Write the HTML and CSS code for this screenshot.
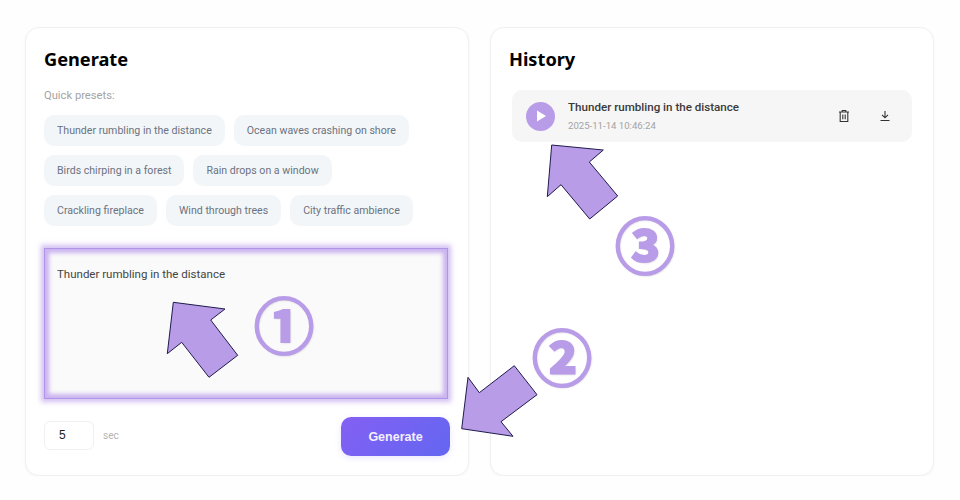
FILE: index.html
```html
<!DOCTYPE html>
<html lang="en">
<head>
    <meta charset="UTF-8">
    <meta name="viewport" content="width=device-width, initial-scale=1.0">
    <title>Sound Generator</title>
    <link rel="stylesheet" href="styles.css">
</head>
<body>
    <div class="container">
        <div class="card">
            <h2 class="card-title">Generate</h2>
            <p class="presets-label">Quick presets:</p>
            <div class="presets">
                <span class="preset">Thunder rumbling in the distance</span>
                <span class="preset">Ocean waves crashing on shore</span>
                <span class="preset">Birds chirping in a forest</span>
                <span class="preset">Rain drops on a window</span>
                <span class="preset">Crackling fireplace</span>
                <span class="preset">Wind through trees</span>
                <span class="preset">City traffic ambience</span>
            </div>
            <div class="prompt">Thunder rumbling in the distance</div>
            <div class="controls">
                <div class="duration">
                    <span class="duration-input">5</span>
                    <span class="duration-unit">sec</span>
                </div>
                <button class="generate-btn">Generate</button>
            </div>
        </div>

        <div class="card">
            <h2 class="card-title">History</h2>
            <div class="history-item">
                <span class="play-btn">
                    <svg width="12" height="12" viewBox="0 0 12 12"><path d="M2 0.5 L11 6 L2 11.5 Z" fill="#fff"/></svg>
                </span>
                <div class="history-text">
                    <div class="history-title">Thunder rumbling in the distance</div>
                    <div class="history-date">2025-11-14 10:46:24</div>
                </div>
                <div class="history-actions">
                    <svg width="14" height="14" viewBox="0 0 14 14" fill="none" stroke="#333" stroke-width="1.1">
                        <path d="M2 3 H12 M5.2 3 V1.5 H8.8 V3 M3.2 3 V12.5 H10.8 V3 M5.8 5.5 V10.3 M8.2 5.5 V10.3"/>
                    </svg>
                    <svg width="14" height="14" viewBox="0 0 14 14" fill="none" stroke="#333" stroke-width="1.1">
                        <path d="M7 2 V8.6 M4 5.8 L7 8.8 L10 5.8 M2.5 11.5 H11.5"/>
                    </svg>
                </div>
            </div>
        </div>
    </div>

    <!-- annotations drawn on top of the screenshot -->
    <svg class="arrows" width="960" height="500" viewBox="0 0 960 500">
        <polygon points="173.3,302.3 225,309 210.7,320 237.7,355.3 209,377.3 181.7,342.3 167.3,353.7"/>
        <polygon points="461.7,428.7 468,377.3 479.3,392.7 514.3,365.7 537,394.7 501,421.7 513,436.3"/>
        <polygon points="551.7,145 603.3,150 589.3,162 617.7,196 589.7,219 561,184.7 547.3,196.7"/>
    </svg>
    <span class="step step-1">①</span>
    <span class="step step-2">②</span>
    <span class="step step-3">③</span>
</body>
</html>
```

FILE: styles.css
```css
* {
    margin: 0;
    padding: 0;
    box-sizing: border-box;
    font-family: Roboto, "Noto Sans", sans-serif;
}

body {
    background-color: #fefefe;
    padding: 27px 25px 0;
}

.container {
    display: flex;
    gap: 21px;
}

.card {
    width: 444px;
    height: 449px;
    padding: 18px;
    background: white;
    border: 1px solid #f0f0f0;
    border-radius: 14px;
    box-shadow: 0 1px 3px rgba(0, 0, 0, 0.04);
}

.card-title {
    font-family: "Noto Sans", sans-serif;
    font-size: 18.2px;
    line-height: 26px;
    font-weight: 700;
    color: #000;
}

.presets-label {
    margin-top: 16px;
    font-size: 11.2px;
    line-height: 16px;
    color: #a3a3a3;
}

.presets {
    display: flex;
    flex-wrap: wrap;
    gap: 9px;
    margin-top: 11px;
}

.preset {
    height: 31px;
    padding: 0 13px;
    line-height: 31px;
    font-size: 10.6px;
    color: #6b7280;
    background: #f3f6f8;
    border-radius: 10px;
}

.prompt {
    height: 151px;
    margin: 22px 2px 0 0;
    padding: 17px 12px;
    font-size: 11.5px;
    line-height: 16px;
    color: #444;
    background: #fafafa;
    border: 1px solid #b095e6;
    box-shadow: 0 0 5px 3px rgba(180, 148, 232, 0.6), inset 0 0 4px 4px rgba(190, 160, 236, 0.8);
}

.controls {
    display: flex;
    justify-content: space-between;
    align-items: center;
    margin-top: 18px;
}

.duration {
    display: flex;
    align-items: center;
    gap: 9px;
    margin-bottom: 3px;
}

.duration-input {
    width: 50px;
    height: 29px;
    padding-left: 14px;
    line-height: 27px;
    font-family: "Liberation Sans", sans-serif;
    font-size: 12px;
    color: #222;
    border: 1px solid #f0f0f0;
    border-radius: 6px;
}

.duration-unit {
    font-size: 10px;
    color: #b5b5b5;
}

.generate-btn {
    width: 109px;
    height: 39px;
    font-family: "Liberation Sans", sans-serif;
    font-size: 12.5px;
    font-weight: 700;
    color: #f4f0ff;
    background: linear-gradient(135deg, #8460f4, #6366f1);
    border: none;
    border-radius: 10px;
    box-shadow: 0 2px 6px rgba(120, 90, 240, 0.15);
}

.history-item {
    display: flex;
    align-items: center;
    width: 400px;
    height: 52px;
    margin: 18px 0 0 3px;
    padding: 0 14px;
    background: #f6f6f6;
    border-radius: 10px;
}

.play-btn {
    display: flex;
    align-items: center;
    justify-content: center;
    flex: none;
    width: 29px;
    height: 29px;
    background: #b99ce8;
    border-radius: 50%;
}

.history-text {
    flex: 1;
    margin-left: 13px;
}

.history-title {
    font-size: 11.6px;
    line-height: 16px;
    font-weight: 500;
    color: #3a3a3a;
}

.history-date {
    margin-top: 4px;
    font-size: 9.6px;
    line-height: 14px;
    color: #a3a3a3;
}

.history-actions {
    display: flex;
    gap: 27px;
    margin-right: 6px;
}

.arrows {
    position: absolute;
    top: 0;
    left: 0;
    pointer-events: none;
}

.arrows polygon {
    fill: #b99ce8;
    stroke: #1f1b4d;
    stroke-width: 1;
}

.step {
    position: absolute;
    width: 70px;
    text-align: center;
    font-family: "Noto Sans CJK JP", "DejaVu Sans", sans-serif;
    font-size: 60px;
    line-height: 70px;
    font-weight: 700;
    color: #b99ce8;
    -webkit-text-stroke: 2.2px #b99ce8;
    text-shadow: 1px 1px 2px rgba(90, 80, 110, 0.35);
}

.step-1 { left: 249px; top: 288px; }
.step-2 { left: 527px; top: 320px; }
.step-3 { left: 610px; top: 208px; }
```
